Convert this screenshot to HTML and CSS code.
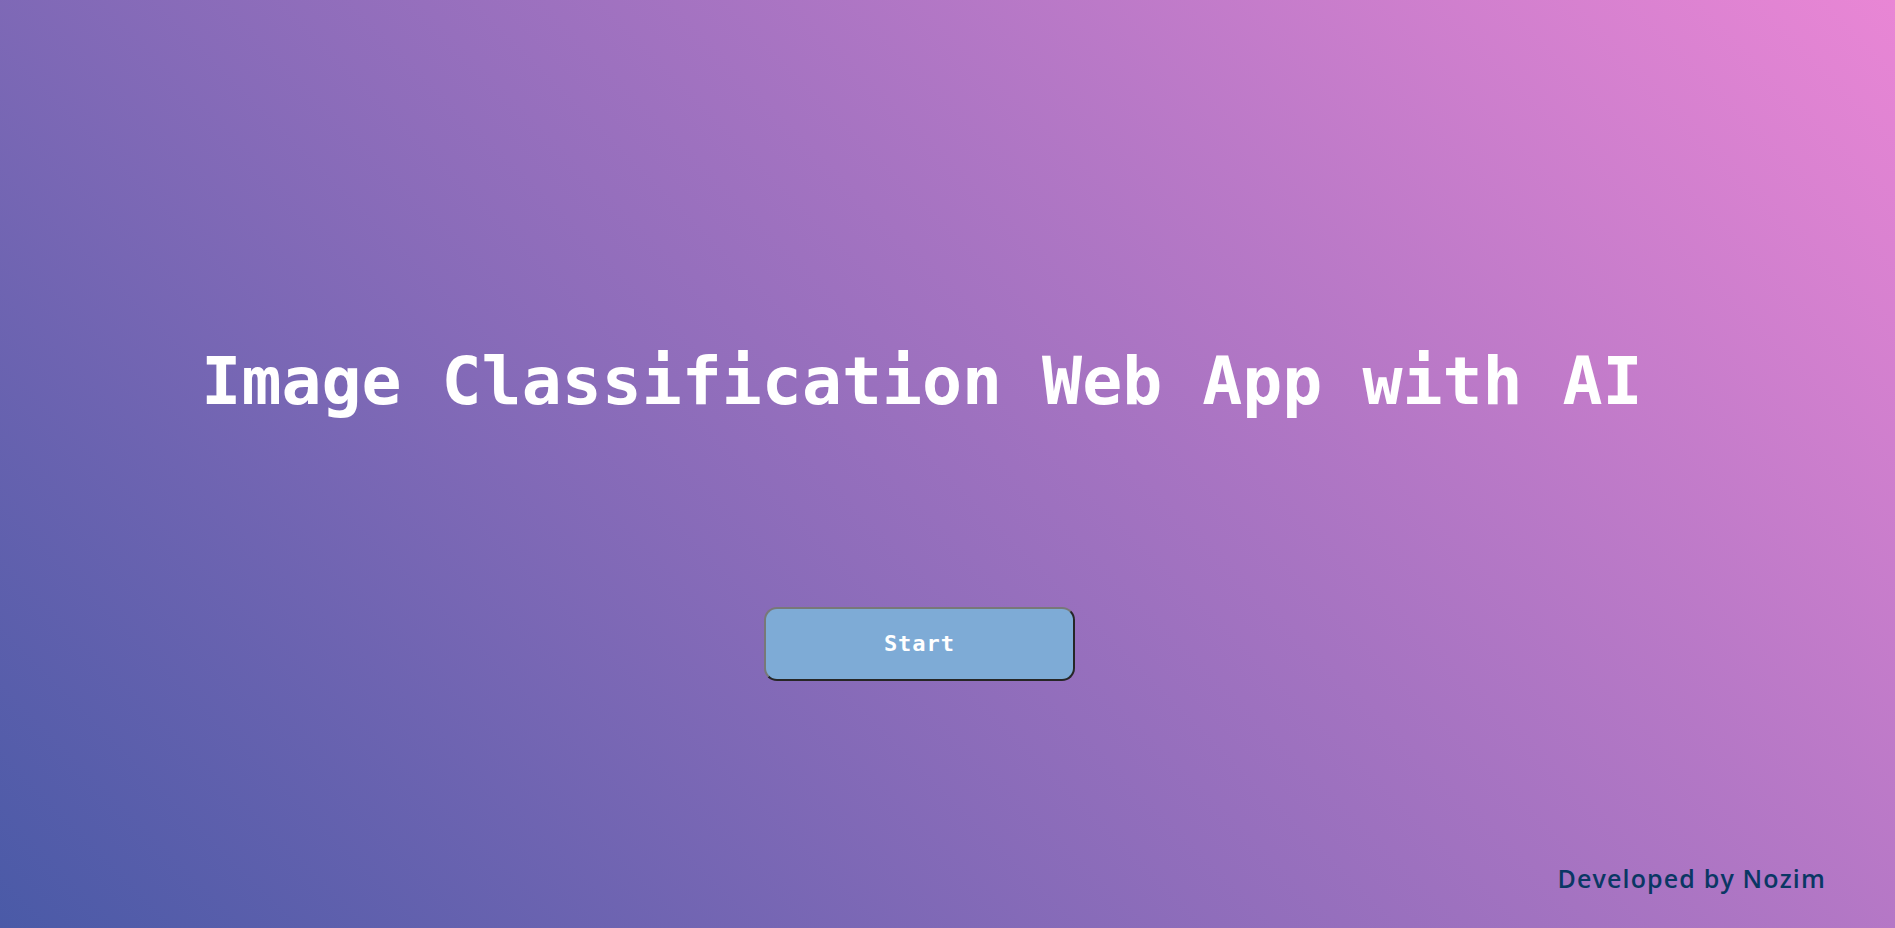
FILE: index.html
```html
<!DOCTYPE html>
<html>
<head>
<meta charset="utf-8">
<title>Image Classification Web App with AI</title>
<link rel="stylesheet" href="styles.css">
</head>
<body>
<main class="page">
  <h1 class="title">Image Classification Web App with AI</h1>
  <button class="start-btn">Start</button>
  <footer class="footer">Developed by Nozim</footer>
</main>
</body>
</html>
```

FILE: styles.css
```css
html, body {
  margin: 0;
  padding: 0;
  height: 100%;
}
body {
  background: linear-gradient(45deg, #4a5aa7 0%, #e986d5 100%);
  overflow: hidden;
}
.page {
  box-sizing: border-box;
  height: 100vh;
  padding-right: 56px;
  display: flex;
  flex-direction: column;
  align-items: center;
}
.title {
  margin: 342px 0 0 5px;
  font-family: "DejaVu Sans Mono", monospace;
  font-weight: bold;
  font-size: 66.5px;
  line-height: 1.2;
  color: #ffffff;
  white-space: nowrap;
}
.start-btn {
  margin-top: 185px;
  width: 311px;
  height: 74px;
  background: #7eabd6;
  border: 2px solid;
  border-color: #787878 #262626 #262626 #787878;
  border-radius: 13px;
  color: #ffffff;
  font-family: "DejaVu Sans Mono", monospace;
  font-weight: bold;
  font-size: 22px;
  letter-spacing: 1px;
  cursor: pointer;
}
.footer {
  margin-top: auto;
  align-self: flex-end;
  margin-right: 13px;
  padding-bottom: 35px;
  font-family: "Open Sans", sans-serif;
  font-weight: 600;
  font-size: 25px;
  letter-spacing: 1.15px;
  line-height: 1.2;
  color: #0a3764;
}
```
